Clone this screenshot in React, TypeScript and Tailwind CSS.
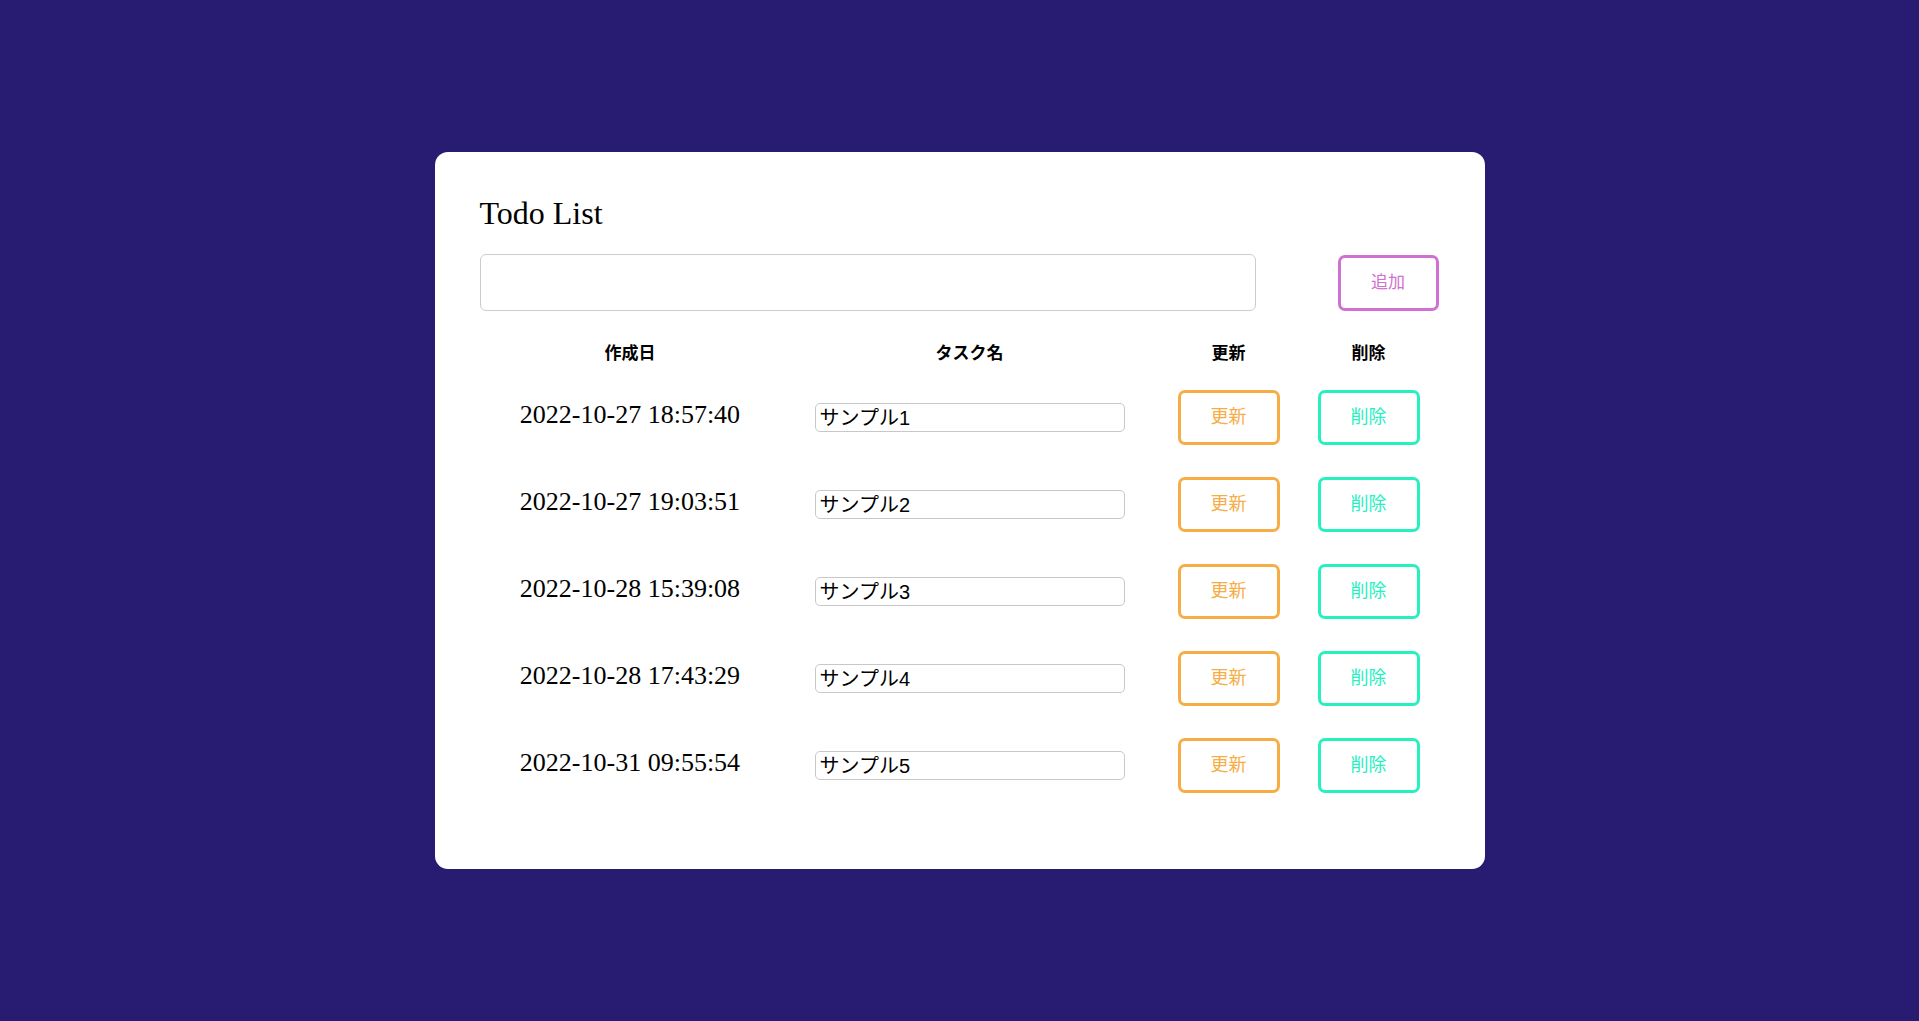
import { useState } from "react";

type Todo = { id: number; createdAt: string; name: string };

const initialTodos: Todo[] = [
  { id: 1, createdAt: "2022-10-27 18:57:40", name: "サンプル1" },
  { id: 2, createdAt: "2022-10-27 19:03:51", name: "サンプル2" },
  { id: 3, createdAt: "2022-10-28 15:39:08", name: "サンプル3" },
  { id: 4, createdAt: "2022-10-28 17:43:29", name: "サンプル4" },
  { id: 5, createdAt: "2022-10-31 09:55:54", name: "サンプル5" },
];

const serif = "font-['Liberation_Serif','Noto_Sans_CJK_JP',serif]";
const sans = "font-['Liberation_Sans','Noto_Sans_CJK_JP',sans-serif]";

export default function App() {
  const [todos, setTodos] = useState<Todo[]>(initialTodos);
  const [draft, setDraft] = useState("");

  return (
    <div className="flex min-h-screen items-center justify-center bg-[#271c72]">
      <div className={`h-[717px] w-[1050px] rounded-[13px] bg-white pl-[45px] pr-[46px] pt-[41px] ${serif}`}>
        {/* タイトル */}
        <h1 className="text-[32px] leading-[40px] font-normal text-black">Todo List</h1>

        {/* 追加フォーム */}
        <div className="mt-[21px] flex items-center justify-between">
          <input
            className={`h-[57px] w-[776px] rounded-[6px] border border-[#cccccc] px-3 text-[20px] outline-none ${sans}`}
            value={draft}
            onChange={(ev) => setDraft(ev.target.value)}
          />
          <button
            className={`h-[56px] w-[101px] rounded-[7px] border-[3px] border-[#d070d0] bg-white text-[17px] text-[#d070d0] ${sans}`}
            onClick={() => {
              if (!draft) return;
              setTodos((prev) => [
                ...prev,
                { id: Date.now(), createdAt: "2022-10-31 10:00:00", name: draft },
              ]);
              setDraft("");
            }}
          >
            追加
          </button>
        </div>

        {/* 一覧 */}
        <div className="mt-[22px] grid h-[41px] grid-cols-[301px_378px_140px_140px] items-center text-[17px] font-bold text-black">
          <div className="text-center">作成日</div>
          <div className="text-center">タスク名</div>
          <div className="text-center">更新</div>
          <div className="text-center">削除</div>
        </div>

        {todos.map((todo) => (
          <div
            key={todo.id}
            className="grid h-[87px] grid-cols-[301px_378px_140px_140px] items-center"
          >
            <div className="pb-[5px] text-center text-[26px] leading-[30px] text-black">{todo.createdAt}</div>
            <div className="flex justify-center">
              <input
                className={`h-[29px] w-[310px] rounded-[5px] border border-[#c8c8c8] px-[4px] text-[20px] text-black outline-none ${sans}`}
                defaultValue={todo.name}
              />
            </div>
            <div className="flex justify-center">
              <button
                className={`h-[55px] w-[102px] rounded-[7px] border-[3px] border-[#f6ad46] bg-white text-[18px] text-[#f6ad46] ${sans}`}
              >
                更新
              </button>
            </div>
            <div className="flex justify-center">
              <button
                className={`h-[55px] w-[102px] rounded-[7px] border-[3px] border-[#27f0bf] bg-white text-[18px] text-[#27f0bf] ${sans}`}
                onClick={() => setTodos((prev) => prev.filter((t) => t.id !== todo.id))}
              >
                削除
              </button>
            </div>
          </div>
        ))}
      </div>
    </div>
  );
}
